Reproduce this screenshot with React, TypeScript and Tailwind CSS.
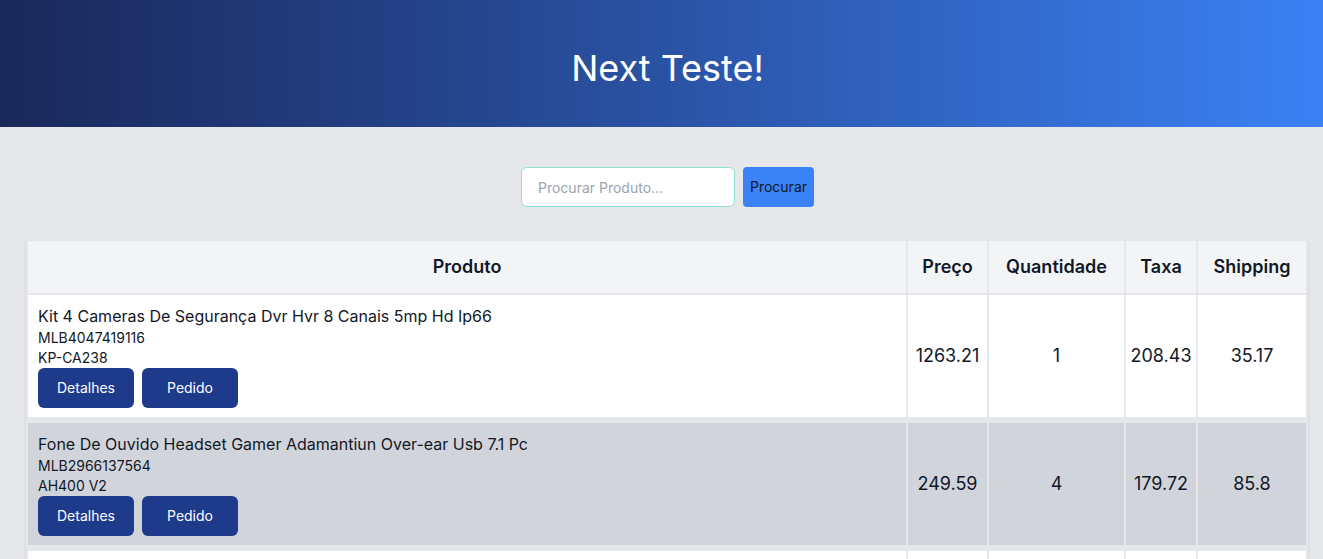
import { useState } from "react";

const produtos = [
  {
    titulo: "Kit 4 Cameras De Segurança Dvr Hvr 8 Canais 5mp Hd Ip66",
    id: "MLB4047419116",
    sku: "KP-CA238",
    preco: "1263.21",
    quantidade: 1,
    taxa: "208.43",
    shipping: "35.17",
  },
  {
    titulo: "Fone De Ouvido Headset Gamer Adamantiun Over-ear Usb 7.1 Pc",
    id: "MLB2966137564",
    sku: "AH400 V2",
    preco: "249.59",
    quantidade: 4,
    taxa: "179.72",
    shipping: "85.8",
  },
  {
    titulo: "Mouse Gamer Sem Fio Recarregável Rgb 3200 Dpi",
    id: "MLB3318820147",
    sku: "MG-RGB32",
    preco: "89.9",
    quantidade: 2,
    taxa: "24.27",
    shipping: "19.95",
  },
];

export default function App() {
  const [busca, setBusca] = useState("");

  return (
    <div className="min-h-screen overflow-hidden bg-[#e5e7eb] font-['Inter',sans-serif] text-[#111827]">
      {/* page is a bit wider than the window */}
      <div className="w-[1335px]">
        <header className="h-[127px] pt-2 flex items-center justify-center bg-gradient-to-r from-[#19285a] to-[#3b82f6]">
          <h1 className="text-4xl text-white">Next Teste!</h1>
        </header>

        <div className="flex justify-center gap-2 pt-10">
          <input
            className="w-[214px] h-10 px-4 rounded-md border border-[#8fe2d3] bg-white text-sm outline-none placeholder:text-[#9ca3af]"
            value={busca}
            onChange={(e: any) => setBusca(e.target.value)}
            type="text"
            placeholder="Procurar Produto..."
          />
          <button className="w-[71px] h-10 rounded bg-[#3b82f6] text-sm text-[#111827]">
            Procurar
          </button>
        </div>

        <div className="mt-8 pl-[26px] pr-[27px]">
          <table className="w-full table-fixed border-separate border-spacing-[2px] shadow-sm">
            <thead>
              <tr className="bg-[#f3f4f6]">
                <th className="py-3 text-lg font-semibold">Produto</th>
                <th className="w-[79px] py-3 text-lg font-semibold">Preço</th>
                <th className="w-[135px] py-3 text-lg font-semibold">Quantidade</th>
                <th className="w-[70px] py-3 text-lg font-semibold">Taxa</th>
                <th className="w-[108px] py-3 text-lg font-semibold">Shipping</th>
              </tr>
            </thead>
            <tbody>
              {produtos.map((p, i) => (
                <tr key={p.id} className={i % 2 === 1 ? "bg-[#d1d5db]" : "bg-white"}>
                  <td className="px-2.5 pt-[9px] pb-[9px] border-b-4 border-[#e5e7eb] align-top">
                    <div className="text-base leading-6">{p.titulo}</div>
                    <div className="text-sm leading-5">{p.id}</div>
                    <div className="text-sm leading-5">{p.sku}</div>
                    <div className="flex gap-2">
                      <button className="w-24 h-10 rounded-md bg-[#1e3a8a] text-sm text-white">
                        Detalhes
                      </button>
                      <button className="w-24 h-10 rounded-md bg-[#1e3a8a] text-sm text-white">
                        Pedido
                      </button>
                    </div>
                  </td>
                  <td className="text-center text-lg border-b-4 border-[#e5e7eb]">{p.preco}</td>
                  <td className="text-center text-lg border-b-4 border-[#e5e7eb]">{p.quantidade}</td>
                  <td className="text-center text-lg border-b-4 border-[#e5e7eb]">{p.taxa}</td>
                  <td className="text-center text-lg border-b-4 border-[#e5e7eb]">{p.shipping}</td>
                </tr>
              ))}
            </tbody>
          </table>
        </div>
      </div>
    </div>
  );
}
